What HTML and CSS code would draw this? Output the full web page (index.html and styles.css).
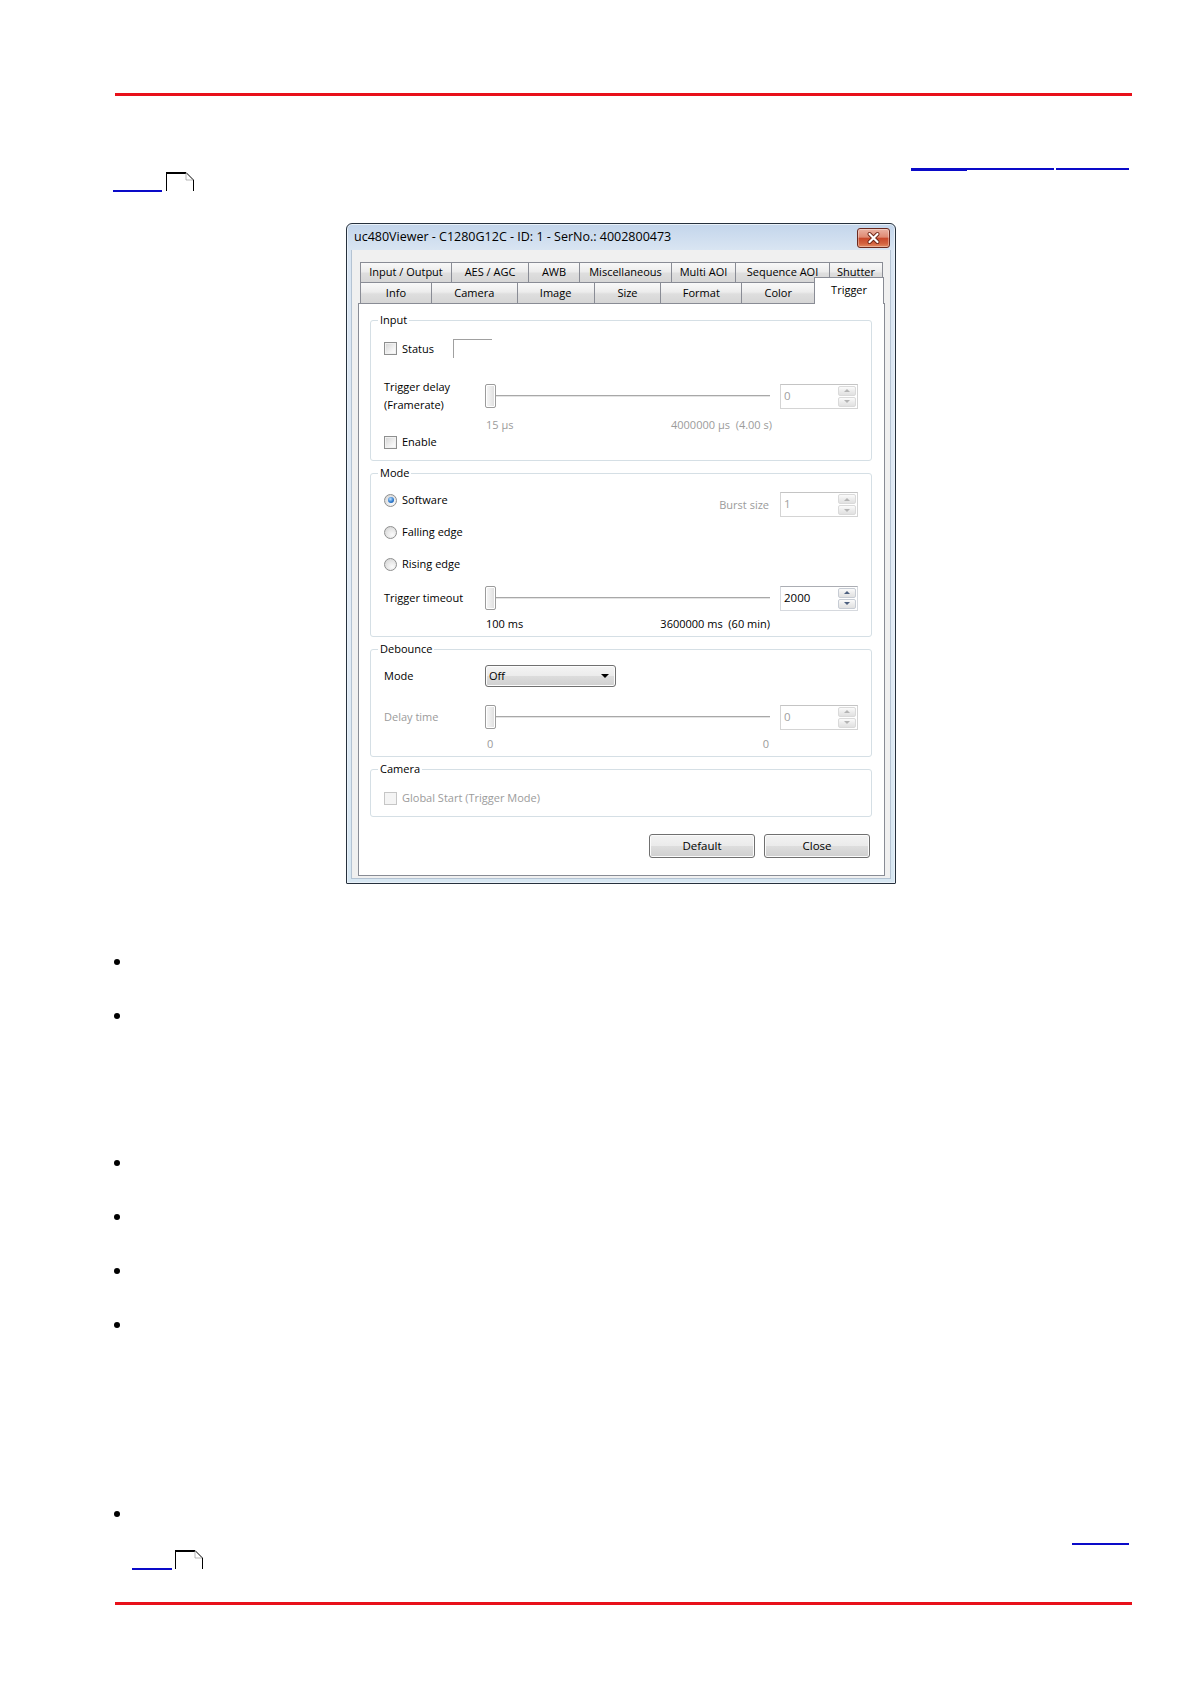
FILE: index.html
```html
<!DOCTYPE html>
<html lang="en">
<head>
<meta charset="utf-8">
<title>uc480Viewer - Trigger</title>
<link rel="stylesheet" href="styles.css">
</head>
<body>
<div class="page">
  <div class="rule rule-top"></div>

  <div class="linkrow linkrow-top">
    <span class="uline uline-a"></span><span class="uline uline-b"></span><span class="uline uline-c"></span>
  </div>
  <div class="linkrow2 linkrow2-top">
    <span class="uline uline-d"></span>
    <svg class="pageicon" width="28" height="19" viewBox="0 0 28 19">
      <path d="M0.5 19 V1" stroke="#000" stroke-width="1" fill="none"/>
      <path d="M0 1 H20" stroke="#000" stroke-width="2" fill="none"/>
      <path d="M20 0.5 L27.5 8 V19" stroke="#000" stroke-width="1" fill="none"/>
      <path d="M20 1 V8 H27" stroke="#9a9a9a" stroke-width="0.7" fill="none"/>
    </svg>
  </div>

  <div class="dialog">
    <div class="titlebar">
      <span class="title">uc480Viewer - C1280G12C - ID: 1 - SerNo.: 4002800473</span>
      <span class="closebtn">
        <svg width="31" height="18" viewBox="0 0 31 18">
          <path d="M11.5 5 L19.5 13 M19.5 5 L11.5 13" stroke="#6e2517" stroke-width="4" stroke-linecap="round"/>
          <path d="M11.5 5 L19.5 13 M19.5 5 L11.5 13" stroke="#ffffff" stroke-width="2.2" stroke-linecap="round"/>
        </svg>
      </span>
    </div>
    <div class="client">
      <div class="tabs">
        <div class="tabrow tabrow-1">
          <div class="tab w-io">Input / Output</div>
          <div class="tab w-aes">AES / AGC</div>
          <div class="tab w-awb">AWB</div>
          <div class="tab w-misc">Miscellaneous</div>
          <div class="tab w-multi">Multi AOI</div>
          <div class="tab w-seq">Sequence AOI</div>
          <div class="tab w-shut">Shutter</div>
        </div>
        <div class="tabrow tabrow-2">
          <div class="tab w-info">Info</div>
          <div class="tab w-cam">Camera</div>
          <div class="tab w-img">Image</div>
          <div class="tab w-size">Size</div>
          <div class="tab w-fmt">Format</div>
          <div class="tab w-col">Color</div>
          <div class="tab tab-active w-trig">Trigger</div>
        </div>
      </div>

      <div class="tabpanel">
        <fieldset class="group g-input">
          <legend>Input</legend>
          <div class="row row-status">
            <div class="check check-status"><span class="box"></span><span class="ctext">Status</span></div>
            <span class="static"></span>
          </div>
          <div class="row slider-row r-delay">
            <div class="slabel">Trigger delay<br>(Framerate)</div>
            <div class="slider"><span class="thumb"></span><span class="track"></span></div>
            <div class="spin spin-dis"><span class="val">0</span><span class="spinbtns"><span class="sb sb-up"></span><span class="sb sb-down"></span></span></div>
          </div>
          <div class="row scale scale-a dim"><span>15 µs</span><span class="pre">4000000 µs  (4.00 s)</span></div>
          <div class="row line-row r-enable">
            <div class="check"><span class="box"></span><span class="ctext">Enable</span></div>
          </div>
        </fieldset>

        <fieldset class="group g-mode">
          <legend>Mode</legend>
          <div class="row row-software">
            <div class="radio-item"><span class="radio radio-on"><span class="dot"></span></span><span class="ctext">Software</span></div>
            <div class="burst">
              <span class="dim">Burst size</span>
              <div class="spin spin-dis"><span class="val">1</span><span class="spinbtns"><span class="sb sb-up"></span><span class="sb sb-down"></span></span></div>
            </div>
          </div>
          <div class="row line-row r-falling">
            <div class="radio-item"><span class="radio"></span><span class="ctext">Falling edge</span></div>
          </div>
          <div class="row line-row r-rising">
            <div class="radio-item"><span class="radio"></span><span class="ctext">Rising edge</span></div>
          </div>
          <div class="row slider-row r-timeout">
            <div class="slabel">Trigger timeout</div>
            <div class="slider"><span class="thumb"></span><span class="track"></span></div>
            <div class="spin"><span class="val">2000</span><span class="spinbtns"><span class="sb sb-up"></span><span class="sb sb-down"></span></span></div>
          </div>
          <div class="row scale scale-b"><span>100 ms</span><span class="pre">3600000 ms  (60 min)</span></div>
        </fieldset>

        <fieldset class="group g-debounce">
          <legend>Debounce</legend>
          <div class="row combo-row">
            <div class="slabel">Mode</div>
            <div class="combo"><span class="cval">Off</span><span class="carrow"></span></div>
          </div>
          <div class="row slider-row r-delaytime">
            <div class="slabel dim">Delay time</div>
            <div class="slider"><span class="thumb"></span><span class="track"></span></div>
            <div class="spin spin-dis"><span class="val">0</span><span class="spinbtns"><span class="sb sb-up"></span><span class="sb sb-down"></span></span></div>
          </div>
          <div class="row scale scale-c dim"><span>0</span><span>0</span></div>
        </fieldset>

        <fieldset class="group g-camera">
          <legend>Camera</legend>
          <div class="row line-row r-global">
            <div class="check check-dis"><span class="box"></span><span class="ctext dim">Global Start (Trigger Mode)</span></div>
          </div>
        </fieldset>

        <div class="buttons">
          <div class="btn">Default</div>
          <div class="btn">Close</div>
        </div>
      </div>
    </div>
  </div>

  <ul class="bullets">
    <li class="b1"></li>
    <li class="b2"></li>
    <li class="b3"></li>
    <li class="b4"></li>
    <li class="b5"></li>
    <li class="b6"></li>
    <li class="b7"></li>
  </ul>

  <div class="linkrow linkrow-bottom">
    <span class="uline uline-e"></span>
  </div>
  <div class="linkrow2 linkrow2-bottom">
    <span class="uline uline-f"></span>
    <svg class="pageicon" width="28" height="19" viewBox="0 0 28 19">
      <path d="M0.5 19 V1" stroke="#000" stroke-width="1" fill="none"/>
      <path d="M0 1 H20" stroke="#000" stroke-width="2" fill="none"/>
      <path d="M20 0.5 L27.5 8 V19" stroke="#000" stroke-width="1" fill="none"/>
      <path d="M20 1 V8 H27" stroke="#9a9a9a" stroke-width="0.7" fill="none"/>
    </svg>
  </div>

  <div class="rule rule-bottom"></div>
</div>
</body>
</html>
```

FILE: styles.css
```css
html, body {
  margin: 0;
  padding: 0;
  background: #ffffff;
}
body {
  font-family: "Open Sans", "Noto Sans", sans-serif;
  color: #000;
}
.page {
  width: 1017px;
  padding-left: 115px;
}

/* red rules */
.rule {
  height: 3px;
  background: #e8101a;
}
.rule-top { margin-top: 93px; }
.rule-bottom { margin-top: 32px; }

/* link underlines (link text not rendered in source) */
.uline {
  display: block;
  height: 2px;
  background: #0a0ac8;
}
.linkrow {
  display: flex;
  justify-content: flex-end;
  align-items: flex-start;
  padding-right: 3px;
}
.linkrow-top { margin-top: 72px; height: 3px; }
.uline-a { width: 56px; height: 3px; }
.uline-b { width: 87px; }
.uline-c { width: 73px; margin-left: 2px; }
.linkrow2 {
  display: flex;
  align-items: flex-end;
  height: 20px;
}
.linkrow2-top { margin-top: 1px; }
.uline-d { width: 49px; margin-left: -2px; }
.pageicon { align-self: flex-start; margin-left: 4px; display: block; }
.linkrow-bottom { margin-top: 26px; height: 2px; }
.uline-e { width: 57px; }
.linkrow2-bottom { margin-top: 5px; }
.uline-f { width: 40px; margin-left: 17px; }
.linkrow2-bottom .pageicon { margin-left: 3px; }

/* bullets */
.bullets {
  list-style: none;
  margin: 75px 0 0 -1px;
  padding: 0;
}
.bullets li {
  width: 6px;
  height: 6px;
  border-radius: 50%;
  background: #000;
}
.bullets .b2, .bullets .b4, .bullets .b5, .bullets .b6 { margin-top: 48px; }
.bullets .b3 { margin-top: 141px; }
.bullets .b7 { margin-top: 183px; }

/* ===== dialog ===== */
.dialog {
  box-sizing: border-box;
  width: 550px;
  height: 661px;
  margin-top: 31px;
  margin-left: 231px;
  border: 1px solid #26313d;
  border-radius: 6px 6px 1px 1px;
  background: linear-gradient(#c3d5eb, #d9e5f2 26px, #e3ecf6 60%, #d7e7f2);
  padding: 0 4px 4px 4px;
  display: flex;
  flex-direction: column;
  font-size: 11px;
  line-height: 16px;
  box-shadow: inset 0 0 0 1px #e9f1f9;
}
.titlebar {
  height: 26px;
  display: flex;
  justify-content: space-between;
  align-items: flex-start;
  flex-shrink: 0;
}
.title {
  font-size: 12.5px;
  line-height: 26px;
  padding-left: 3px;
  color: #000;
  white-space: nowrap;
}
.closebtn {
  box-sizing: border-box;
  width: 33px;
  height: 20px;
  margin-top: 4px;
  margin-right: 1px;
  border: 1px solid #6b2a1f;
  border-radius: 3px;
  background: linear-gradient(#eab2a3, #df8a73 45%, #c9492c 52%, #d3623f 80%, #e48a61);
  box-shadow: inset 0 0 0 1px rgba(255,255,255,0.35);
  display: flex;
  align-items: center;
  justify-content: center;
}
.closebtn svg { display: block; }

.client {
  flex: 1;
  display: flex;
  flex-direction: column;
  background: #f0f0f0;
  padding: 12px 6px 2px 6px;
  border: 1px solid #b4c3d3;
  border-top: none;
}

/* tabs */
.tabs { flex-shrink: 0; }
.tabrow {
  display: flex;
  margin-left: 2px;
}
.tabrow-1 { height: 20px; }
.tabrow-2 { height: 21px; margin-left: 2px; align-items: flex-end; }
.tab {
  box-sizing: border-box;
  height: 100%;
  border: 1px solid #898c95;
  border-bottom: none;
  margin-left: -1px;
  background: linear-gradient(#f9f9f9, #ececec 45%, #dedede 55%, #d6d6d6);
  text-align: center;
  font-size: 11px;
  line-height: 18px;
  color: #000;
  white-space: nowrap;
}
.tab:first-child { margin-left: 0; }
.tabrow-2 .tab { line-height: 20px; }
.tab-active {
  position: relative;
  z-index: 1;
  height: 27px;
  margin-bottom: -1px;
  background: #ffffff;
  line-height: 20px;
  padding-top: 2px;
  padding-bottom: 4px;
}
.w-io { width: 92px; }
.w-aes { width: 78px; }
.w-awb { width: 52px; }
.w-misc { width: 93px; }
.w-multi { width: 65px; }
.w-seq { width: 95px; }
.w-shut { width: 54px; }
.w-info { width: 72px; }
.w-cam { width: 87px; }
.w-img { width: 78px; }
.w-size { width: 68px; }
.w-fmt { width: 82px; }
.w-col { width: 74px; }
.w-trig { width: 70px; }

.tabpanel {
  flex: 1;
  box-sizing: border-box;
  width: 527px;
  margin-left: 0;
  background: #ffffff;
  border: 1px solid #898c95;
  padding: 8px 12px 0 11px;
}

/* group boxes */
.group {
  box-sizing: border-box;
  width: 502px;
  margin: 0;
  border: 1px solid #d5dfe5;
  border-radius: 3px;
  padding: 0 13px 0 13px;
  min-width: 0;
}
.group legend {
  padding: 0 2px;
  margin-left: -6px;
  line-height: 16px;
  font-size: 11px;
  color: #000;
}
.g-input { padding-bottom: 10px; }
.g-mode { margin-top: 4px; padding-bottom: 4px; }
.g-debounce { margin-top: 4px; padding-bottom: 4px; }
.g-camera { margin-top: 4px; padding-bottom: 10px; }

.row { display: flex; align-items: center; }
.dim { color: #9b9b9b; }
.pre { white-space: pre; }

.row-status { margin-top: 11px; height: 19px; }
.check-status { width: 69px; }
.static {
  box-sizing: border-box;
  width: 39px;
  height: 19px;
  border-top: 1px solid #a0a0a0;
  border-left: 1px solid #a0a0a0;
}

.check, .radio-item {
  display: flex;
  align-items: center;
  height: 16px;
}
.box {
  box-sizing: border-box;
  width: 13px;
  height: 13px;
  border: 1px solid #8e8f8f;
  background: linear-gradient(135deg, #d3d3d3, #f6f6f6 70%, #fdfdfd);
  box-shadow: inset 0 0 0 1px #f1f1f1;
  flex-shrink: 0;
}
.check-dis .box {
  border-color: #c6c6c6;
  background: #f4f4f4;
  box-shadow: none;
}
.ctext { margin-left: 5px; white-space: nowrap; }
.radio {
  box-sizing: border-box;
  width: 13px;
  height: 13px;
  border-radius: 50%;
  border: 1px solid #8e8f8f;
  background: radial-gradient(circle at 65% 70%, #fbfbfb, #e4e4e4 55%, #cfcfcf);
  display: flex;
  align-items: center;
  justify-content: center;
  flex-shrink: 0;
}
.radio .dot {
  width: 6px;
  height: 6px;
  border-radius: 50%;
  background: radial-gradient(circle at 40% 35%, #bfe3ff, #2f7bcf 55%, #154f9a);
}

/* slider rows */
.slider-row {
  display: grid;
  grid-template-columns: 101px 295px 78px;
  column-gap: 0;
  align-items: center;
  height: 36px;
}
.r-delay { margin-top: 20px; }
.slabel { line-height: 18px; white-space: nowrap; }
.slider {
  display: flex;
  align-items: center;
  height: 25px;
  padding-right: 10px;
}
.thumb {
  box-sizing: border-box;
  width: 11px;
  height: 24px;
  border: 1px solid #9c9c9c;
  border-radius: 2px;
  background: linear-gradient(90deg, #f7f7f7, #e9e9e9 60%, #dcdcdc);
  box-shadow: inset 0 0 0 1px #ffffff;
  flex-shrink: 0;
}
.track {
  flex: 1;
  height: 0;
  border-top: 1px solid #a8a8a8;
  border-bottom: 1px solid #e4e4e4;
}
.spin {
  box-sizing: border-box;
  width: 78px;
  height: 25px;
  border: 1px solid #d6d9de;
  border-top-color: #abadb3;
  background: #fff;
  display: flex;
  justify-content: space-between;
  align-items: stretch;
}
.spin .val {
  padding-left: 3px;
  line-height: 21px;
  font-size: 11.5px;
}
.spin-dis { border-color: #d4d4d4; border-top-color: #c4c4c4; }
.spin-dis .val { color: #a0a0a0; }
.spinbtns {
  width: 18px;
  padding: 1px 1px 1px 0;
  display: flex;
  flex-direction: column;
  gap: 1px;
}
.sb {
  flex: 1;
  box-sizing: border-box;
  border: 1px solid #c7ccd4;
  border-radius: 2px;
  background: linear-gradient(#fbfbfb, #ececec 50%, #e1e1e1);
  display: flex;
  align-items: center;
  justify-content: center;
}
.sb::before {
  content: "";
  width: 0;
  height: 0;
  border-left: 3px solid transparent;
  border-right: 3px solid transparent;
}
.sb-up::before { border-bottom: 3px solid #4c5f7f; }
.sb-down::before { border-top: 3px solid #4c5f7f; }
.spin-dis .sb { border-color: #dadada; }
.spin-dis .sb-up::before { border-bottom-color: #b4b4b4; }
.spin-dis .sb-down::before { border-top-color: #b4b4b4; }

/* scale labels */
.scale {
  justify-content: space-between;
  height: 16px;
  margin-left: 102px;
  width: 286px;
  white-space: nowrap;
}
.scale-a { margin-top: 3px; }
.scale-b { width: 284px; }
.scale-c { margin-left: 103px; width: 282px; margin-top: 1px; }

.line-row { height: 16px; }
.r-enable { margin-top: 1px; }

/* mode group */
.row-software {
  margin-top: 11px;
  height: 25px;
  justify-content: space-between;
  align-items: flex-start;
}
.burst {
  display: flex;
  align-items: center;
  height: 25px;
  gap: 11px;
}
.r-falling { margin-top: 7px; }
.r-rising { margin-top: 16px; }
.r-timeout { margin-top: 8px; }

/* debounce */
.combo-row {
  display: grid;
  grid-template-columns: 101px 131px;
  align-items: center;
  height: 22px;
  margin-top: 8px;
}
.combo {
  box-sizing: border-box;
  height: 22px;
  border: 1px solid #707070;
  border-radius: 3px;
  background: linear-gradient(#f4f4f4, #ececec 48%, #dcdcdc 52%, #d0d0d0);
  box-shadow: inset 0 0 0 1px #fcfcfc;
  display: flex;
  align-items: center;
  justify-content: space-between;
  padding: 0 6px 0 3px;
}
.cval { line-height: 18px; }
.carrow {
  width: 0;
  height: 0;
  border-left: 4px solid transparent;
  border-right: 4px solid transparent;
  border-top: 4px solid #000;
}
.r-delaytime { margin-top: 12px; }

/* camera */
.r-global { margin-top: 13px; }

/* buttons */
.buttons {
  display: flex;
  justify-content: flex-end;
  gap: 9px;
  margin-top: 17px;
  margin-right: 2px;
}
.btn {
  box-sizing: border-box;
  width: 106px;
  height: 24px;
  border: 1px solid #707070;
  border-radius: 3px;
  background: linear-gradient(#f2f2f2, #ebebeb 48%, #dddddd 52%, #cfcfcf);
  box-shadow: inset 0 0 0 1px #fbfbfb;
  text-align: center;
  line-height: 21px;
  font-size: 11.5px;
}
```
